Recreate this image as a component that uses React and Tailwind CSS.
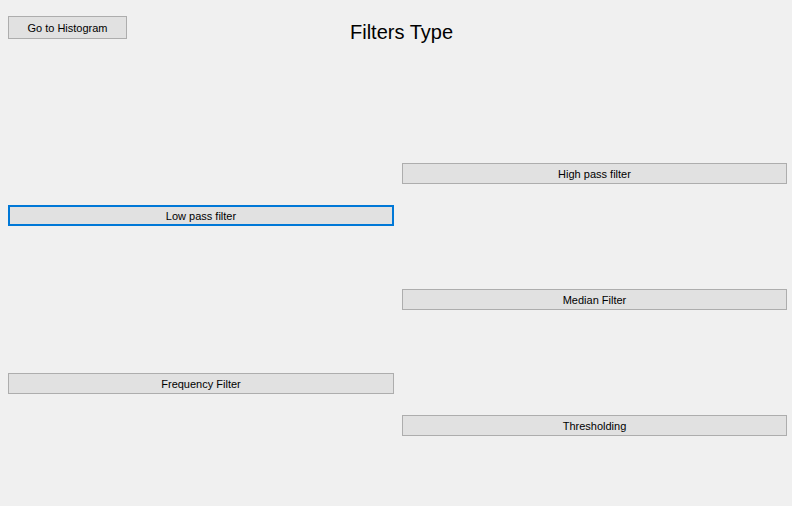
import React from 'react';

const btn = "h-[21px] bg-[#e1e1e1] border border-[#adadad] text-[11px] leading-none pt-[1px] text-black flex items-center justify-center";

export default function App() {
    return (
        <div className="w-[792px] h-[506px] bg-[#f0f0f0] overflow-hidden" style={{ fontFamily: '"Liberation Sans", Arial, sans-serif' }}>
            <div className="h-[163px] flex items-start">
                <button className="mt-[16px] ml-[8px] w-[119px] h-[23px] bg-[#e1e1e1] border border-[#adadad] text-[11px] leading-none pt-[1px] text-black flex items-center justify-center">Go to Histogram</button>
                <h1 className="mt-[22px] ml-[223px] text-[20px] leading-[20px] text-black font-normal">Filters Type</h1>
            </div>
            <div className="grid grid-cols-[386px_385px] gap-x-[8px] px-[8px] auto-rows-[42px]">
                <div></div>
                <button className={btn}>High pass filter</button>
                <button className="h-[21px] bg-[#e1e1e1] border-2 border-[#0078d7] text-[11px] leading-none pt-[1px] text-black flex items-center justify-center">Low pass filter</button>
                <div></div>
                <div></div><div></div>
                <div></div>
                <button className={btn}>Median Filter</button>
                <div></div><div></div>
                <button className={btn}>Frequency Filter</button>
                <div></div>
                <div></div>
                <button className={btn}>Thresholding</button>
            </div>
        </div>
    );
}
